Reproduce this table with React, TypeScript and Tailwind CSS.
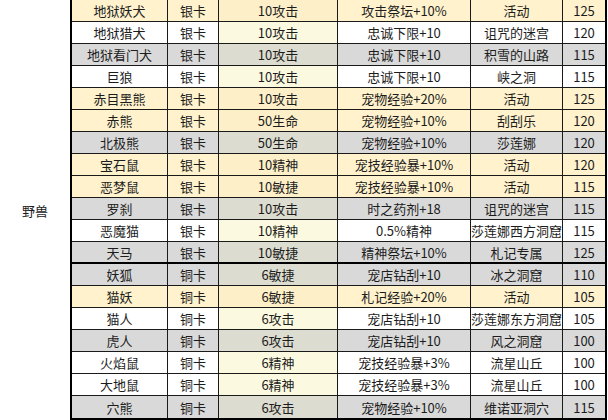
const rows: [string, string, string, string, string, string, string][] = [
  ["地狱妖犬", "银卡", "10攻击", "攻击祭坛+10%", "活动", "125", "y"],
  ["地狱猎犬", "银卡", "10攻击", "忠诚下限+10", "诅咒的迷宫", "120", "w"],
  ["地狱看门犬", "银卡", "10攻击", "忠诚下限+10", "积雪的山路", "115", "g"],
  ["巨狼", "银卡", "10攻击", "忠诚下限+10", "峡之洞", "115", "w"],
  ["赤目黑熊", "银卡", "10攻击", "宠物经验+20%", "活动", "125", "y"],
  ["赤熊", "银卡", "50生命", "宠物经验+10%", "刮刮乐", "120", "y"],
  ["北极熊", "银卡", "50生命", "宠物经验+10%", "莎莲娜", "120", "g"],
  ["宝石鼠", "银卡", "10精神", "宠技经验暴+10%", "活动", "120", "y"],
  ["恶梦鼠", "银卡", "10敏捷", "宠技经验暴+10%", "活动", "115", "y"],
  ["罗刹", "银卡", "10攻击", "时之药剂+18", "诅咒的迷宫", "115", "g"],
  ["恶魔猫", "银卡", "10精神", "0.5%精神", "莎莲娜西方洞窟", "115", "w"],
  ["天马", "银卡", "10敏捷", "精神祭坛+10%", "札记专属", "125", "g"],
  ["妖狐", "铜卡", "6敏捷", "宠店钻刮+10", "冰之洞窟", "110", "g"],
  ["猫妖", "铜卡", "6敏捷", "札记经验+20%", "活动", "105", "y"],
  ["猫人", "铜卡", "6攻击", "宠店钻刮+10", "莎莲娜东方洞窟", "105", "w"],
  ["虎人", "铜卡", "6攻击", "宠店钻刮+10", "风之洞窟", "100", "g"],
  ["火焰鼠", "铜卡", "6精神", "宠技经验暴+3%", "流星山丘", "100", "w"],
  ["大地鼠", "铜卡", "6精神", "宠技经验暴+3%", "流星山丘", "100", "w"],
  ["穴熊", "铜卡", "6攻击", "宠物经验+10%", "维诺亚洞穴", "115", "g"],
];

const rowBg: Record<string, string> = { y: "bg-[#fff2cc]", w: "bg-white", g: "bg-[#d9d9d9]" };
const valBg: Record<string, string> = { y: "bg-[#fdf0c9]", w: "bg-[#fbfae0]", g: "bg-[#dcdcd0]" };

function Row({ r, i }: { r: (typeof rows)[number]; i: number }) {
  const last = i === rows.length - 1;
  const border = last ? "" : i === 11 ? "border-b-2 border-black" : "border-b border-[#1a1a1a]";
  const cell = "flex items-center justify-center border-r border-[#1a1a1a] h-full";
  return (
    <div className={`flex h-[22px] ${rowBg[r[6]]} ${border}`}>
      <div className={`${cell} w-[96px]`}>{r[0]}</div>
      <div className={`${cell} w-[51px]`}>{r[1]}</div>
      <div className={`${cell} w-[119px] ${valBg[r[6]]}`}>{r[2]}</div>
      <div className={`${cell} w-[133px]`}>{r[3]}</div>
      <div className={`${cell} w-[92px]`}>{r[4]}</div>
      <div className="flex items-center justify-center w-[42px] h-full">{r[5]}</div>
    </div>
  );
}

export default function App() {
  return (
    <div
      className="w-[608px] h-[420px] bg-white overflow-hidden text-[13px] text-[#1c1c1c] leading-none"
      style={{ fontFamily: '"Noto Sans CJK SC", "Liberation Sans", sans-serif' }}
    >
      <div className="flex">
        <div className="w-[70px] flex items-center justify-center">野兽</div>
        <div className="w-[537px] flex flex-col border-l-2 border-r-2 border-b-2 border-black">
          {rows.map((r, i) => (
            <Row key={r[0]} r={r} i={i} />
          ))}
        </div>
      </div>
    </div>
  );
}
